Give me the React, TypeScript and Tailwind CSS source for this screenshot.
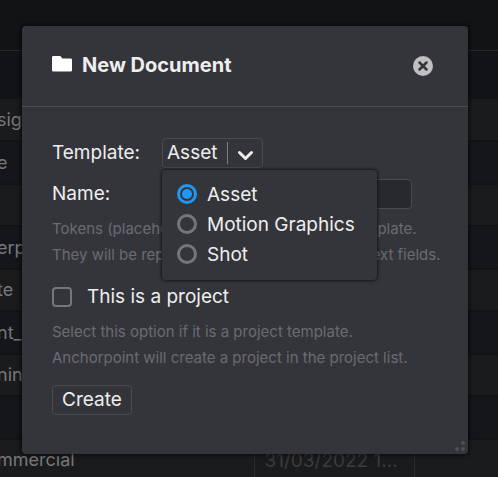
import { useState } from "react";

const templates = ["Asset", "Motion Graphics", "Shot"];

const rows = [
  { name: "sign", date: "" },
  { name: "e", date: "" },
  { name: "", date: "" },
  { name: "erp", date: "" },
  { name: "te", date: "" },
  { name: "nt_", date: "" },
  { name: "ning", date: "" },
  { name: "", date: "" },
  { name: "mmercial", date: "31/03/2022 1..." },
];

function FileTable() {
  return (
    <div className="col-start-1 row-start-1 min-w-0 overflow-hidden">
      <div className="h-[50px] bg-[#121315]" />
      <div className="h-[49px] border-t border-[#27282a] bg-[#121316]" />
      <table className="w-full table-fixed border-collapse text-lg text-[#77787a]">
        <colgroup>
          <col className="w-[254px]" />
          <col className="w-40" />
          <col />
        </colgroup>
        <tbody>
          {rows.map((row, i) => (
            <tr
              key={i}
              className="h-[43px] border-b-2 border-[#121315] odd:h-[42px] odd:bg-[#1a1b1c] even:bg-[#15161a] last:h-[38px]"
            >
              <td className="p-0">
                <span className="-ml-[3px] block leading-5">{row.name}</span>
              </td>
              <td className="border-x border-[#292a2c] p-0 pt-0.5 pl-2.5 text-[19px] leading-5 text-[#3b3c3e]">{row.date}</td>
              <td className="p-0" />
            </tr>
          ))}
        </tbody>
      </table>
    </div>
  );
}

function FolderIcon() {
  return (
    <svg className="mb-0.5" width="20" height="16" viewBox="0 0 20 16" fill="#fff" aria-hidden="true">
      <path d="M1.4 0H8.400L10.400 2.400H18.600A1.400 1.400 0 0 1 20 3.800V14.200A1.400 1.400 0 0 1 18.600 15.600H1.400A1.400 1.400 0 0 1 0 14.200V1.400A1.400 1.400 0 0 1 1.400 0Z" />
    </svg>
  );
}

function TemplatePicker() {
  const [template, setTemplate] = useState("Asset");
  return (
    <div className="relative h-[30px] w-[101px]">
      <select
        id="template"
        value={template}
        onChange={(e) => setTemplate(e.target.value)}
        className="h-full w-full appearance-none rounded border border-[#4a4b4f] bg-transparent pr-9 pl-1 text-[#eeeeef] outline-none"
      >
        {templates.map((name) => (
          <option key={name}>{name}</option>
        ))}
      </select>
      <svg
        className="pointer-events-none absolute top-0 right-0"
        width="36"
        height="30"
        viewBox="0 0 36 30"
        fill="none"
        aria-hidden="true"
      >
        <path d="M0.500 4V26" stroke="#7b7c80" />
        <path d="M12.500 14.500L18.500 20.500L24.500 14.500" stroke="#eeeeef" strokeWidth="3" strokeLinecap="round" strokeLinejoin="round" />
      </svg>
      <div className="absolute top-8 left-0 z-10 flex w-[215px] flex-col rounded bg-[#34353a] px-[15px] pt-[9px] pb-[11px] shadow-[0_0_3px_1px_rgba(0,0,0,0.6)]">
        {templates.map((name) => (
          <label key={name} className="flex h-[30px] items-center gap-2.5 whitespace-nowrap">
            <input
              type="radio"
              name="template"
              checked={template === name}
              onChange={() => setTemplate(name)}
              className="size-5 shrink-0 appearance-none rounded-full border-3 border-[#75767b] checked:border-[#2196f3] checked:bg-[#2196f3] checked:bg-clip-content checked:p-0.5"
            />
            <span className="pt-0.5">{name}</span>
          </label>
        ))}
      </div>
    </div>
  );
}

function NewDocumentDialog() {
  return (
    <div
      role="dialog"
      aria-labelledby="title"
      className="relative col-start-1 row-start-1 mt-[26px] mr-[30px] mb-[23px] ml-[22px] rounded bg-[#34353a] text-[#eeeeef] shadow-[0_0_4px_1px_rgba(0,0,0,0.7)]"
    >
      <header className="flex h-[81px] items-center justify-between border-b border-[#4b4c50] pr-[35px] pl-[30px]">
        <div className="flex items-center gap-2.5 pb-[3px]">
          <FolderIcon />
          <h1 id="title" className="text-xl font-bold">
            New Document
          </h1>
        </div>
        <button aria-label="Close">
          <svg width="20" height="20" viewBox="0 0 20 20" aria-hidden="true">
            <circle cx="10" cy="10" r="10" fill="#c0c0c1" />
            <path d="M6.500 6.500L13.500 13.500M13.500 6.500L6.500 13.500" stroke="#34353a" strokeWidth="2.500" strokeLinecap="round" />
          </svg>
        </button>
      </header>
      <form className="px-[30px] pt-[31px] pb-[39px]" onSubmit={(e) => e.preventDefault()}>
        <div className="grid grid-cols-[110px_1fr] items-center gap-y-[11px]">
          <label htmlFor="template">Template:</label>
          <TemplatePicker />
          <label htmlFor="name">Name:</label>
          <input
            id="name"
            className="h-[30px] w-[250px] rounded border border-[#4a4b4f] bg-[#28292d] px-2 outline-none"
          />
        </div>
        <p className="mt-[7px] text-[15px] leading-[26px] whitespace-nowrap text-[#6a6b71]">
          Tokens (placeholders) were found in your template.
          <br />
          They will be replaced by the contents of the text fields.
        </p>
        <label className="mt-[14px] flex h-[30px] items-center gap-[15px]">
          <input type="checkbox" className="size-5 appearance-none rounded border-2 border-[#75767b] checked:bg-[#2196f3]" />
          This is a project
        </label>
        <p className="mt-[7px] text-[15px] leading-[26px] text-[#6a6b71]">
          Select this option if it is a project template.
          <br />
          Anchorpoint will create a project in the project list.
        </p>
        <button className="mt-[14px] h-[30px] rounded border border-[#4a4b4f] px-[9px]">Create</button>
      </form>
      <svg className="absolute right-0.5 bottom-0.5" width="12" height="12" viewBox="0 0 12 12" fill="#4e4f54" aria-hidden="true">
        <circle cx="9" cy="3" r="2" />
        <circle cx="3" cy="9" r="2" />
        <circle cx="9" cy="9" r="2" />
      </svg>
    </div>
  );
}

export default function App() {
  return (
    <main className="grid min-h-screen grid-cols-1 items-start overflow-hidden bg-[#121315] font-['Inter',sans-serif] text-[19px] leading-6">
      <FileTable />
      <NewDocumentDialog />
    </main>
  );
}
